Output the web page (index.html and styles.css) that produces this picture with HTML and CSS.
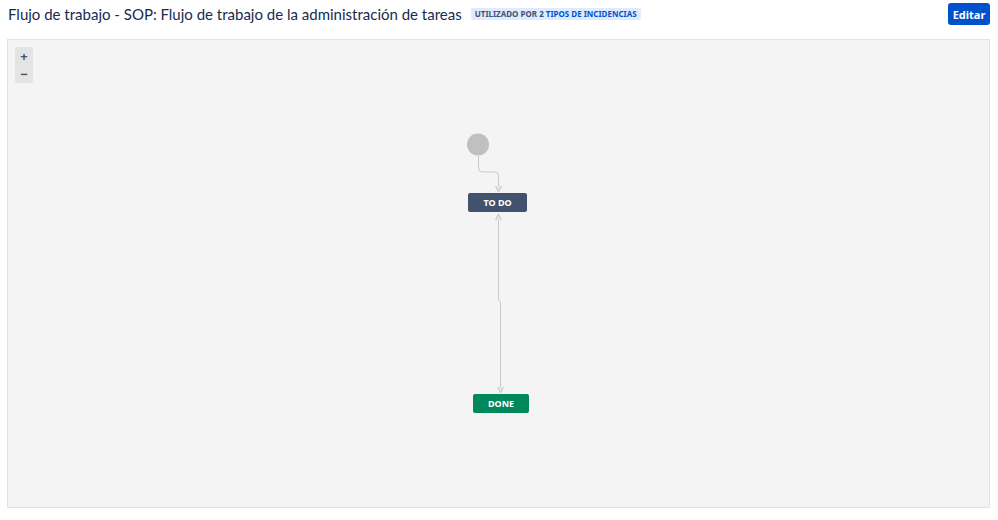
FILE: index.html
```html
<!DOCTYPE html>
<html>
<head>
  <title>Flujo de trabajo - SOP</title>
  <link rel="stylesheet" href="styles.css">
</head>
<body>
  <div class="page">
    <div class="header">
      <h1 class="title">Flujo de trabajo - SOP: Flujo de trabajo de la administración de tareas</h1>
      <span class="lozenge">Utilizado por 2 <a class="lozenge-link">tipos de incidencias</a></span>
      <button class="edit-button">Editar</button>
    </div>

    <div class="canvas">
      <div class="zoom-controls">
        <span class="zoom-btn">+</span>
        <span class="zoom-btn">&minus;</span>
      </div>

      <svg class="diagram" width="981" height="467">
        <defs>
          <marker id="arrow" markerWidth="8" markerHeight="8" refX="7" refY="4" orient="auto-start-reverse" markerUnits="userSpaceOnUse">
            <path d="M1 1 L7 4 L1 7" fill="#e6e6e6" stroke="#c4c4c4" stroke-width="1"/>
          </marker>
        </defs>
        <circle cx="470" cy="104.5" r="11" fill="#c0c0c0"/>
        <path d="M470.5 116 V128 Q470.5 132 474.5 132 H486.5 Q490.5 132 490.5 136 V152" fill="none" stroke="#c8c8c8" stroke-width="1" marker-end="url(#arrow)"/>
        <path d="M490.5 174 V258 Q490.5 261 492.5 262 V353" fill="none" stroke="#c8c8c8" stroke-width="1" marker-start="url(#arrow)" marker-end="url(#arrow)"/>
      </svg>

      <div class="status status-todo">TO DO</div>
      <div class="status status-done">DONE</div>
    </div>
  </div>
</body>
</html>
```

FILE: styles.css
```css
body {
  margin: 0;
  background: #ffffff;
  font-family: "Noto Sans", "Open Sans", sans-serif;
  color: #172b4d;
}

.page {
  padding: 0 8px 0 7px;
}

.header {
  display: flex;
  align-items: center;
  height: 28px;
  margin-bottom: 11px;
}

.title {
  margin: 0 0 0 1px;
  font-family: Lato, "Noto Sans", sans-serif;
  font-size: 15px;
  font-weight: 400;
  color: #172b4d;
  white-space: nowrap;
}

.lozenge {
  margin-left: 9px;
  padding: 0 4px;
  height: 12px;
  line-height: 12px;
  border-radius: 2px;
  background: #deebff;
  color: #42526e;
  font-size: 8px;
  font-weight: 700;
  text-transform: uppercase;
}

.lozenge-link {
  color: #0052cc;
}

.edit-button {
  margin-left: auto;
  height: 22px;
  width: 42px;
  padding: 0;
  border: none;
  border-radius: 3px;
  background: #0052cc;
  color: #ffffff;
  font-family: inherit;
  font-size: 11px;
  font-weight: 700;
}

.canvas {
  position: relative;
  height: 467px;
  border: 1px solid #e2e2e2;
  background: #f4f4f4;
}

.diagram {
  position: absolute;
  left: 0;
  top: 0;
}

.zoom-controls {
  position: absolute;
  left: 7px;
  top: 7px;
  width: 18px;
  display: flex;
  flex-direction: column;
  background: #e4e4e4;
  border-radius: 2px;
}

.zoom-btn {
  height: 18px;
  line-height: 18px;
  text-align: center;
  font-size: 13px;
  font-weight: 700;
  color: #42526e;
}

.status {
  position: absolute;
  height: 19px;
  line-height: 19px;
  border-radius: 2px;
  color: #ffffff;
  font-size: 9px;
  font-weight: 700;
  text-align: center;
}

.status-todo {
  left: 460px;
  top: 153px;
  width: 59px;
  background: #42526e;
}

.status-done {
  left: 465px;
  top: 354px;
  width: 56px;
  background: #00875a;
}
```
